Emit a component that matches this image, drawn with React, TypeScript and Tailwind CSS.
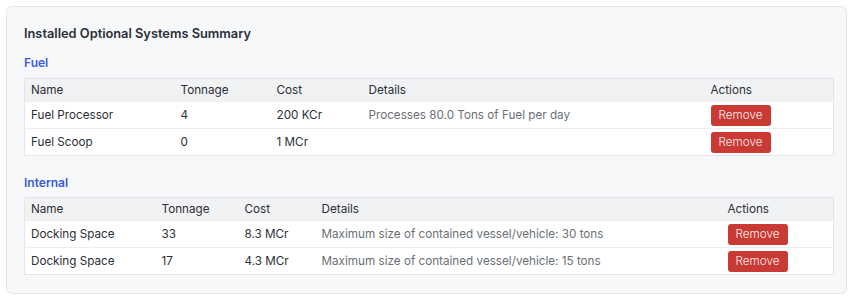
const fuelRows = [
  { name: "Fuel Processor", tonnage: "4", cost: "200 KCr", details: "Processes 80.0 Tons of Fuel per day" },
  { name: "Fuel Scoop", tonnage: "0", cost: "1 MCr", details: "" },
];

const internalRows = [
  { name: "Docking Space", tonnage: "33", cost: "8.3 MCr", details: "Maximum size of contained vessel/vehicle: 30 tons" },
  { name: "Docking Space", tonnage: "17", cost: "4.3 MCr", details: "Maximum size of contained vessel/vehicle: 15 tons" },
];

type Row = { name: string; tonnage: string; cost: string; details: string };

function SystemTable({ rows, widths }: { rows: Row[]; widths: string[] }) {
  return (
    <table className="w-full table-fixed border-collapse border border-[#e3e5e9] bg-white text-[11.7px]">
      <colgroup>
        {widths.map((w, i) => (
          <col key={i} className={w} />
        ))}
      </colgroup>
      <thead>
        <tr className="h-[23px] bg-[#f1f2f4] text-left text-[#2b2f36]">
          <th className="px-[6px] pt-[2px] font-normal">Name</th>
          <th className="px-[6px] pt-[2px] font-normal">Tonnage</th>
          <th className="px-[6px] pt-[2px] font-normal">Cost</th>
          <th className="px-[6px] pt-[2px] font-normal">Details</th>
          <th className="px-[6px] pt-[2px] font-normal">Actions</th>
        </tr>
      </thead>
      <tbody>
        {rows.map((r, i) => (
          <tr key={i} className="h-[27px] border-t border-[#eceef1] text-[#2b2f36]">
            <td className="px-[6px] pt-[2px]">{r.name}</td>
            <td className="px-[6px] pt-[2px]">{r.tonnage}</td>
            <td className="px-[6px] pt-[2px]">{r.cost}</td>
            <td className="px-[6px] pt-[2px] text-[#6b6f76]">{r.details}</td>
            <td className="px-[6px] pt-px">
              <button className="h-[21px] w-[60px] rounded-[3px] bg-[#c93a34] text-[11.7px] font-light text-white/95">
                Remove
              </button>
            </td>
          </tr>
        ))}
      </tbody>
    </table>
  );
}

export default function App() {
  return (
    <div className="p-[6px] font-['Inter',sans-serif]">
      <div className="h-[288px] rounded-[6px] border border-[#e3e5e9] bg-[#f7f8fa] px-[17px] pt-[17px]">
        <h2 className="text-[12.8px] font-semibold leading-[20px] text-[#2b2f36]">
          Installed Optional Systems Summary
        </h2>
        <h3 className="mt-[11px] text-[12px] font-semibold leading-[16px] text-[#3b5bd6]">Fuel</h3>
        <div className="mt-[7px]">
          <SystemTable rows={fuelRows} widths={["w-[150px]", "w-[96px]", "w-[92px]", "w-[342px]", "w-[129px]"]} />
        </div>
        <h3 className="mt-[19px] text-[12px] font-semibold leading-[16px] text-[#3b5bd6]">Internal</h3>
        <div className="mt-[6px]">
          <SystemTable rows={internalRows} widths={["w-[131px]", "w-[83px]", "w-[77px]", "w-[406px]", "w-[112px]"]} />
        </div>
      </div>
    </div>
  );
}
